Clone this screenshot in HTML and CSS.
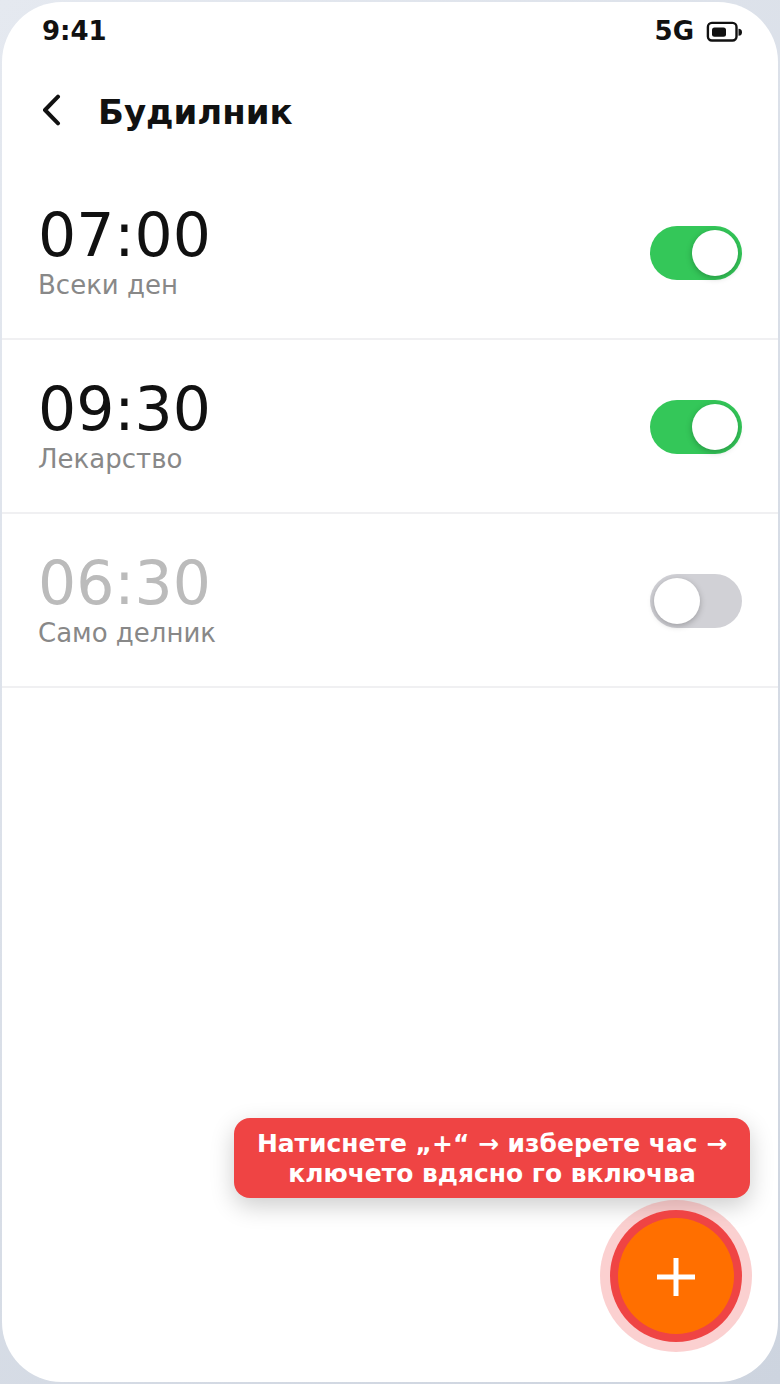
FILE: index.html
```html
<!DOCTYPE html>
<html lang="bg">
<head>
    <meta charset="UTF-8">
    <meta name="viewport" content="width=device-width, initial-scale=1.0">
    <title>Будилник</title>
    <link rel="stylesheet" href="styles.css">
</head>
<body>
    <div class="phone">
        <div class="status-bar">
            <span>9:41</span>
            <div class="status-right">
                <span>5G</span>
                <svg class="battery" width="36" height="22" viewBox="0 0 36 22">
                    <rect x="1.9" y="1.9" width="28.6" height="17.6" rx="4" fill="none" stroke="#111" stroke-width="2.4"/>
                    <rect x="6" y="6.4" width="14" height="9.4" rx="2.5" fill="#111"/>
                    <path d="M32.5 7.7a3.5 3.5 0 0 1 0 7z" fill="#111"/>
                </svg>
            </div>
        </div>

        <header class="app-bar">
            <svg class="back" width="20" height="32" viewBox="0 0 20 32">
                <path d="M16 2.7 3 16l13 13.3" fill="none" stroke="#111" stroke-width="4" stroke-linecap="round" stroke-linejoin="round"/>
            </svg>
            <h1>Будилник</h1>
        </header>

        <div class="alarm-list">
            <div class="alarm">
                <div>
                    <div class="alarm-time">07:00</div>
                    <div class="alarm-label">Всеки ден</div>
                </div>
                <div class="toggle on"><span class="knob"></span></div>
            </div>
            <div class="alarm">
                <div>
                    <div class="alarm-time">09:30</div>
                    <div class="alarm-label">Лекарство</div>
                </div>
                <div class="toggle on"><span class="knob"></span></div>
            </div>
            <div class="alarm off">
                <div>
                    <div class="alarm-time">06:30</div>
                    <div class="alarm-label">Само делник</div>
                </div>
                <div class="toggle"><span class="knob"></span></div>
            </div>
        </div>

        <div class="hint">Натиснете „+“ → изберете час →<br>ключето вдясно го включва</div>
        <div class="fab">
            <svg class="fab-plus" width="38" height="38" viewBox="0 0 38 38">
                <path d="M19 0v38M0 19h38" stroke="#fff" stroke-width="5" fill="none"/>
            </svg>
        </div>
    </div>
</body>
</html>
```

FILE: styles.css
```css
html, body {
    margin: 0;
    padding: 0;
    height: 100%;
}

body {
    background: linear-gradient(135deg, #e5e9f0, #cdd4df);
    font-family: "DejaVu Sans", sans-serif;
    color: #111;
}

.phone {
    position: relative;
    box-sizing: border-box;
    width: 776px;
    height: 1380px;
    margin: 2px;
    border-radius: 60px;
    background: #fff;
    overflow: hidden;
}

.status-bar {
    display: flex;
    justify-content: space-between;
    align-items: center;
    height: 30px;
    padding: 14px 36px 0 40px;
    font-size: 26px;
    font-weight: 700;
}

.status-right {
    display: flex;
    align-items: center;
    gap: 12px;
}

.battery {
    margin-top: 2px;
}

.app-bar {
    display: flex;
    align-items: center;
    gap: 36px;
    height: 64px;
    margin-top: 34px;
    padding-left: 40px;
}

.back {
    flex: none;
    margin-top: -4px;
}

.app-bar h1 {
    margin: 0;
    font-size: 34px;
    font-weight: 700;
}

.alarm-list {
    margin-top: 22px;
}

.alarm {
    box-sizing: border-box;
    display: flex;
    justify-content: space-between;
    align-items: center;
    height: 174px;
    padding: 0 36px;
    border-bottom: 2px solid #f0f0f2;
}

.alarm-time {
    font-size: 60px;
    line-height: 62px;
    margin-bottom: 4px;
}

.alarm-label {
    font-size: 26px;
    line-height: 30px;
    color: #888;
}

.alarm.off .alarm-time {
    color: #bbb;
}

.toggle {
    position: relative;
    width: 92px;
    height: 54px;
    margin-top: 1px;
    border-radius: 27px;
    background: #d1d1d6;
}

.toggle.on {
    background: #34c759;
}

.knob {
    position: absolute;
    top: 4px;
    left: 4px;
    width: 46px;
    height: 46px;
    border-radius: 50%;
    background: #fff;
    box-shadow: 0 2px 6px rgba(0, 0, 0, 0.25);
}

.toggle.on .knob {
    left: 42px;
}

.hint {
    position: absolute;
    right: 28px;
    top: 1116px;
    box-sizing: border-box;
    width: 516px;
    height: 80px;
    padding-top: 11px;
    border-radius: 16px;
    background: #ef4444;
    color: #fff;
    font-size: 24.96px;
    font-weight: 700;
    line-height: 30px;
    text-align: center;
    box-shadow: 0 8px 24px rgba(0, 0, 0, 0.2);
}

.fab {
    position: absolute;
    left: 616px;
    top: 1216px;
    display: flex;
    justify-content: center;
    align-items: center;
    width: 116px;
    height: 116px;
    border-radius: 50%;
    background: #ff6f00;
    box-shadow: 0 0 0 8px #ef4444, 0 0 0 18px rgba(239, 68, 68, 0.25);
}

.fab-plus {
    margin-top: 2px;
}
```
